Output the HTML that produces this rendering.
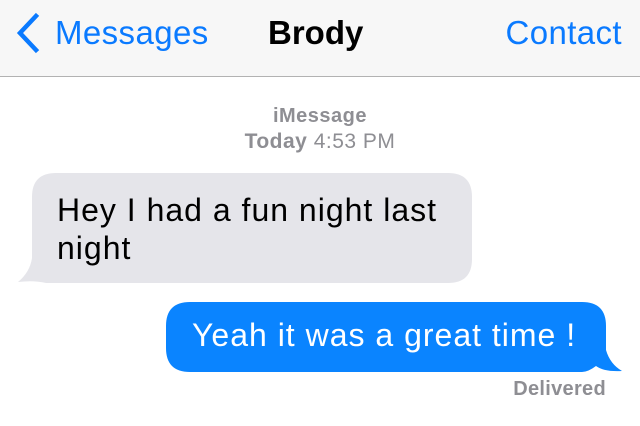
<!DOCTYPE html>
<html><head><style>
*{margin:0;padding:0}
body{width:640px;height:426px;background:#fff;position:relative;overflow:hidden;font-family:"Liberation Sans",sans-serif}
.hdr{position:absolute;left:0;top:0;width:640px;height:76px;background:#f7f7f7;border-bottom:1px solid #b2b2b2}
.t{position:absolute;white-space:nowrap}
</style></head><body>
<div class="hdr"></div>
<svg style="position:absolute;left:0;top:0" width="640" height="426">
<polyline points="36,16 20,33 36,50" fill="none" stroke="#0a7aff" stroke-width="4.5" stroke-linecap="square"/>
<path d="M52,173 H448 Q472,173 472,197 V259 Q472,283 448,283 H46 Q34,280 18,282 Q30,272 32,258 V197 Q32,173 56,173 Z" fill="#e5e5ea"/>
<path d="M190,302 H582 Q606,302 606,326 V350 Q610,364 622,371 Q604,372 596,366 Q588,372 582,372 H190 Q166,372 166,348 V326 Q166,302 190,302 Z" fill="#0a84ff"/>
</svg>
<div class="t" style="left:55px;top:14px;font-size:33px;color:#0a7aff;letter-spacing:0.4px">Messages</div>
<div class="t" style="left:268px;top:14px;font-size:33px;font-weight:bold;color:#000">Brody</div>
<div class="t" style="right:18px;top:14px;font-size:33px;color:#0a7aff;letter-spacing:0.4px">Contact</div>
<div class="t" style="left:0;width:640px;text-align:center;top:105px;font-size:20px;color:#8e8e93;font-weight:bold;letter-spacing:0.5px">iMessage</div>
<div class="t" style="left:0;width:640px;text-align:center;top:130px;font-size:21px;color:#8e8e93;letter-spacing:0.5px"><b>Today</b> 4:53 PM</div>
<div class="t" style="left:57px;top:191px;font-size:32px;color:#000;line-height:38px;letter-spacing:1px">Hey I had a fun night last<br>night</div>
<div class="t" style="left:192px;top:317px;font-size:32px;color:#fff;letter-spacing:1px">Yeah it was a great time !</div>
<div class="t" style="right:34px;top:378px;font-size:20px;color:#8e8e93;font-weight:bold;letter-spacing:0.3px">Delivered</div>
</body></html>
